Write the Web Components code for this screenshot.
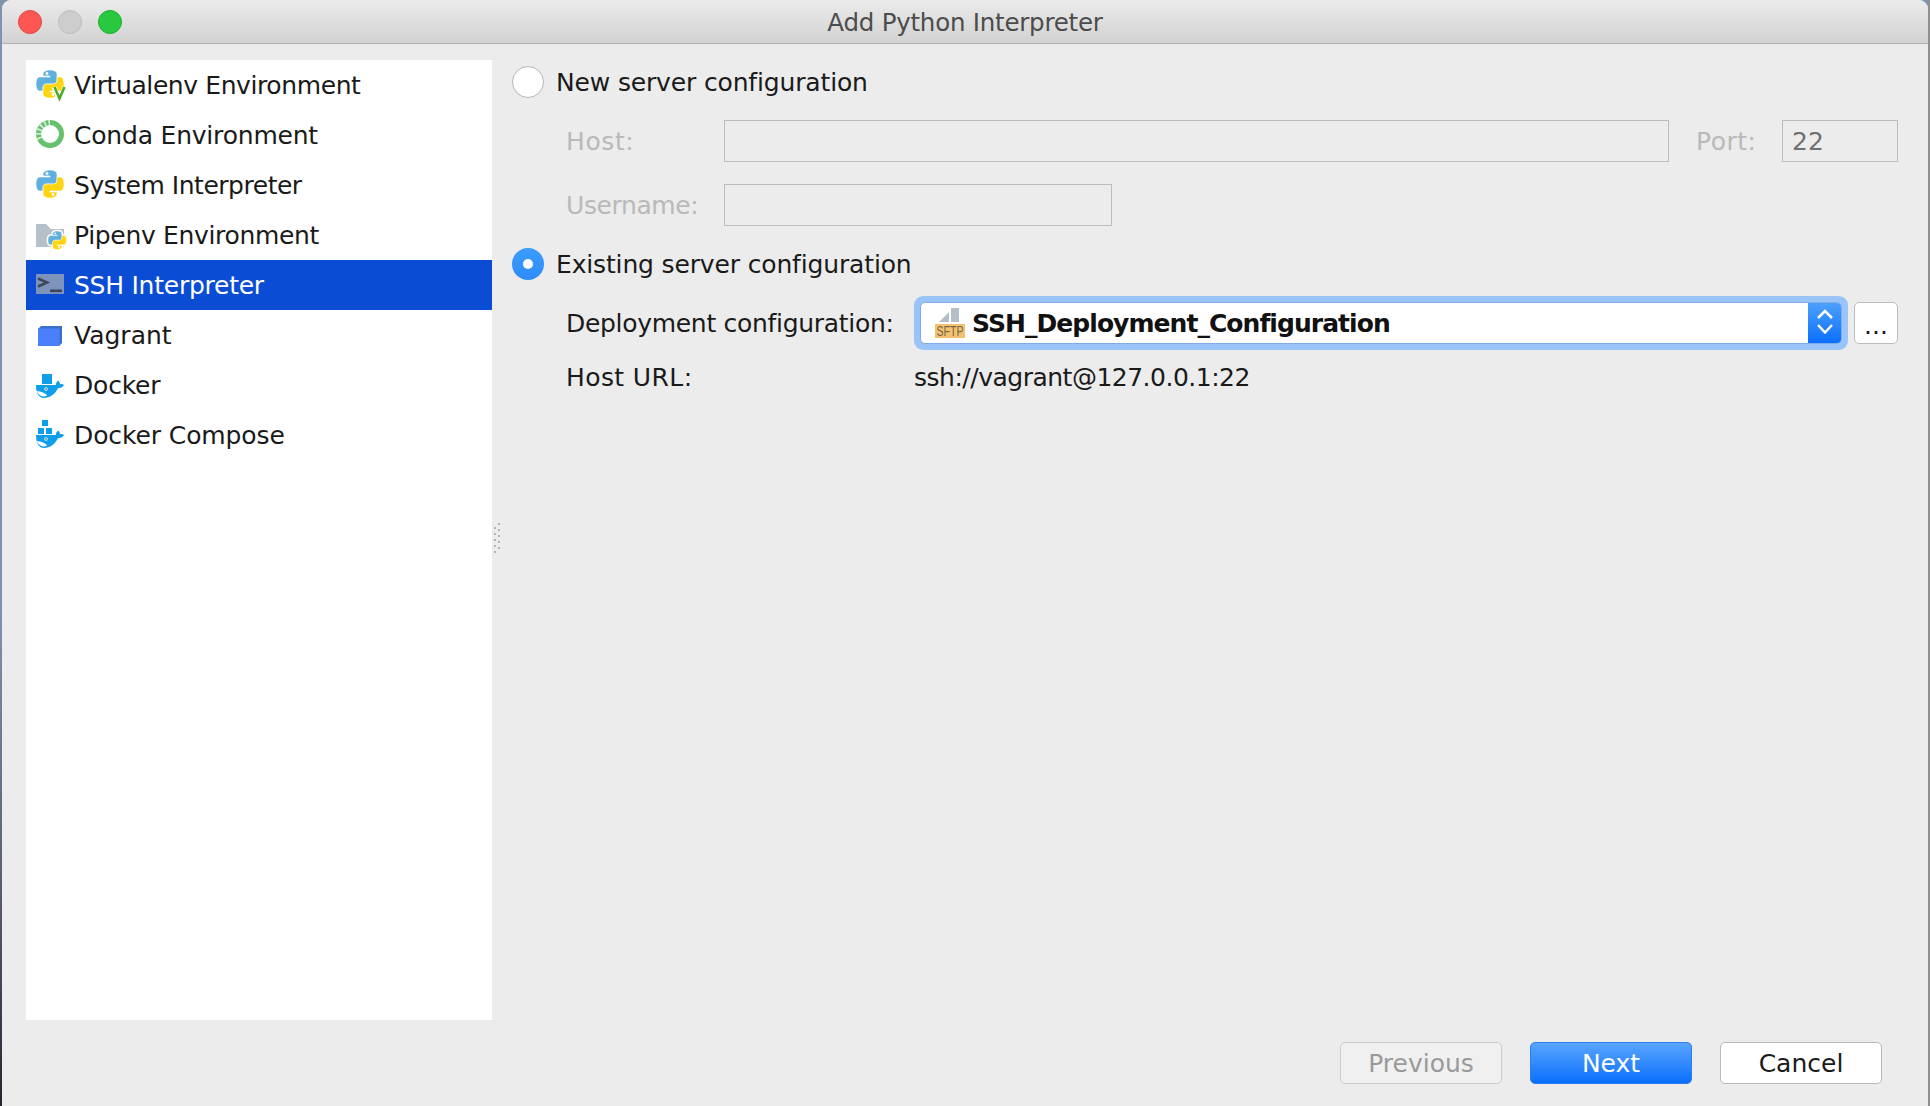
<!DOCTYPE html>
<html>
<head>
<meta charset="utf-8">
<title>Add Python Interpreter</title>
<style>
  html, body { margin: 0; height: 100%; }
  body {
    overflow: hidden;
    background:
      linear-gradient(#8f8f8f, #8f8f8f) right / 2px 100% no-repeat,
      linear-gradient(#7f93ad 0, #7f93ad 55%, #5a5f70 80%, #26262e 100%);
    font: 25px "DejaVu Sans", sans-serif;
    color: #1a1a1a;
  }
</style>
</head>
<body>
<dialog-window heading="Add Python Interpreter">
  <interpreter-list slot="list">
    <list-item icon="virtualenv" style="letter-spacing: -.4px">Virtualenv Environment</list-item>
    <list-item icon="conda" style="letter-spacing: -.2px">Conda Environment</list-item>
    <list-item icon="python" style="letter-spacing: -.48px">System Interpreter</list-item>
    <list-item icon="pipenv" style="letter-spacing: -.33px">Pipenv Environment</list-item>
    <list-item icon="ssh" selected style="letter-spacing: -.25px">SSH Interpreter</list-item>
    <list-item icon="vagrant">Vagrant</list-item>
    <list-item icon="docker" style="letter-spacing: -.2px">Docker</list-item>
    <list-item icon="compose" style="letter-spacing: -.1px">Docker Compose</list-item>
  </interpreter-list>

  <radio-option style="letter-spacing: -.15px">New server configuration</radio-option>
  <form-row disabled>
    <span slot="label" style="letter-spacing: .6px">Host:</span>
    <text-box style="flex: 1"></text-box>
    <span style="margin-left: 27px; width: 86px; color: #b9b9b9; letter-spacing: .5px">Port:</span>
    <text-box style="width: 116px">22</text-box>
  </form-row>
  <form-row disabled>
    <span slot="label" style="letter-spacing: -.4px">Username:</span>
    <text-box style="width: 388px"></text-box>
  </form-row>
  <radio-option checked style="letter-spacing: -.15px">Existing server configuration</radio-option>
  <form-row wide>
    <span slot="label" style="letter-spacing: -.3px">Deployment configuration:</span>
    <combo-box style="flex: 1">SSH_Deployment_Configuration</combo-box>
    <dialog-button kind="browse" style="margin-left: 6px">...</dialog-button>
  </form-row>
  <form-row wide plain>
    <span slot="label" style="letter-spacing: .4px">Host URL:</span>
    <span style="letter-spacing: -.5px">ssh://vagrant@127.0.0.1:22</span>
  </form-row>

  <dialog-button slot="footer" kind="disabled">Previous</dialog-button>
  <dialog-button slot="footer" kind="primary">Next</dialog-button>
  <dialog-button slot="footer">Cancel</dialog-button>
</dialog-window>

<script>
const PY_SHAPE = 'M7 6V4.500C7 1.500 10 0 14 0s7 1.500 7 4.500V11c0 1.700-1.200 3-3 3H11c-2.500 0-4 1.500-4 4v3H4c-2.600 0-4-2.500-4-7s1.400-7 4-7h10V6z';

function pythonLogo() {
  return `
    <path d="${PY_SHAPE}" fill="#5fb0de" stroke="#fff" stroke-width=".6"/>
    <path d="${PY_SHAPE}" fill="#ffd413" stroke="#fff" stroke-width=".6" transform="rotate(180 14 14)"/>
    <circle cx="11" cy="3.500" r="1.400" fill="#fff"/>
    <circle cx="17" cy="24.500" r="1.400" fill="#fff"/>`;
}

function whale() {
  return `
    <path d="M0 15H20c-.3-2.500 1-3.500 2.400-4.500 .7 1.300 1.600 2.400 1.800 3.800 1.300-.4 2.700-.2 3.800.6-1.400 2.400-3.500 3.300-6 3.300C19 24 14 28 8 28 2.500 28 0 22 0 15z" fill="#0f9ee8"/>
    <path d="M.8 21c4 .4 7.500 1.600 10.500 4.200C7.500 27.600 2.800 26.400.8 21z" fill="#fff"/>
    <circle cx="10" cy="19" r="1.700" fill="#fff"/>
    <circle cx="10" cy="19" r=".8" fill="#17405e"/>`;
}

const ICONS = {
  python: `<g transform="translate(0 -1)">${pythonLogo()}</g>`,
  virtualenv: `
    <g transform="translate(0 -1)">${pythonLogo()}</g>
    <path d="M18 16l5.500 13 5.500-13" fill="none" stroke="#fff" stroke-width="4.500"/>
    <path d="M18.500 16l5 11.500 5-11.500" fill="none" stroke="#4dab2c" stroke-width="2.600"/>`,
  conda: `
    <g transform="translate(0 -1)">
      <circle cx="14" cy="14" r="11.500" fill="none" stroke="#66c16e" stroke-width="5"/>
      <path d="M14 2.500A11.500 11.500 0 0 0 5 21" fill="none" stroke="#fff" stroke-width="5" stroke-dasharray="1.600 2.600" opacity=".75"/>
    </g>`,
  pipenv: `
    <path d="M0 3H10L15 8H28V26H0z" fill="#b6c0c8"/>
    <g transform="translate(12 10) scale(.66)">
      <path d="${PY_SHAPE}" fill="#fff" stroke="#fff" stroke-width="4"/>
      <path d="${PY_SHAPE}" fill="#fff" stroke="#fff" stroke-width="4" transform="rotate(180 14 14)"/>
      ${pythonLogo()}
    </g>`,
  ssh: `
    <rect x="0" y="3" width="28" height="20" fill="#7d93bb"/>
    <path d="M2 7.500l9 4-9 4" fill="none" stroke="#3e4657" stroke-width="2.600"/>
    <rect x="14" y="18.500" width="12" height="2.600" fill="#3e4657"/>`,
  vagrant: `
    <path d="M2 8l3-3h21v17l-3 3z" fill="#3d70c8"/>
    <path d="M2 7.500H23.500V25H2z" fill="#4a80fb"/>`,
  docker: `
    <g transform="translate(0 -1)">
      <rect x="6" y="4" width="10" height="10" fill="#0f9ee8"/>
      ${whale()}
    </g>`,
  compose: `
    <g transform="translate(0 -1)">
      <rect x="6" y="0" width="6" height="6" fill="#0f9ee8"/>
      <rect x="2" y="8" width="6" height="6" fill="#0f9ee8"/>
      <rect x="10" y="8" width="6" height="6" fill="#0f9ee8"/>
      ${whale()}
    </g>`,
  sftp: `
    <path d="M4 14L14 4V14z" fill="#b4bec8"/>
    <path d="M16 0h8v14h-8z" fill="#b4bec8"/>
    <rect x="0" y="16" width="30" height="14" fill="#f4c26e"/>
    <text x="15" y="28" text-anchor="middle" textLength="27" lengthAdjust="spacingAndGlyphs" font-family="Liberation Sans, sans-serif" font-size="14" font-weight="normal" letter-spacing="0" fill="#75664a">SFTP</text>`,
};

class IconGlyph extends HTMLElement {
  connectedCallback() {
    const size = this.getAttribute('size') || 28;
    const name = this.getAttribute('name');
    this.attachShadow({ mode: 'open' });
    this.shadowRoot.innerHTML = `
      <style>
        :host { display: block; width: ${size}px; height: ${size}px; flex: none; }
        svg { display: block; overflow: visible; }
      </style>
      <svg width="${size}" height="${size}" viewBox="0 0 ${size} ${size}">${ICONS[name] || ''}</svg>
    `;
  }
}
customElements.define('icon-glyph', IconGlyph);

class DialogWindow extends HTMLElement {
  constructor() {
    super();
    this.attachShadow({ mode: 'open' });
  }

  connectedCallback() {
    this.shadowRoot.innerHTML = `
      <style>
        :host {
          display: flex;
          flex-direction: column;
          height: 1106px;
          margin: 0 2px;
          background: #ececec;
          border-radius: 9px 9px 0 0;
          overflow: hidden;
        }
        .titlebar {
          position: relative;
          display: flex;
          align-items: center;
          justify-content: center;
          height: 44px;
          flex: none;
          box-sizing: border-box;
          padding-top: 1px;
          background: linear-gradient(#ebebeb, #d2d2d2);
          border-bottom: 1px solid #b1b1b1;
          color: #4c4c4c;
          font-size: 24.5px;
          letter-spacing: -.23px;
        }
        .lights {
          position: absolute;
          left: 16px;
          top: 10px;
          display: flex;
          gap: 16px;
        }
        .lights i {
          width: 24px;
          height: 24px;
          border-radius: 50%;
          box-sizing: border-box;
        }
        .red { background: #fc5753; border: 1px solid #df4744; }
        .grey { background: #cdcdcd; border: 1px solid #bdbdbd; }
        .green { background: #28c840; border: 1px solid #1dad2b; }
        .content {
          display: flex;
          height: 976px;
          flex: none;
        }
        .list-slot {
          display: block;
          width: 466px;
          margin: 16px 0 0 24px;
          flex: none;
        }
        .grip {
          display: flex;
          align-items: center;
          justify-content: center;
          box-sizing: border-box;
          width: 10px;
          padding: 14px 0 0 2px;
          flex: none;
        }
        .grip svg { display: block; }
        .panel {
          flex: 1;
          display: flex;
          flex-direction: column;
          padding: 22px 30px 0 10px;
          min-width: 0;
        }
        .footer {
          display: flex;
          justify-content: flex-end;
          gap: 28px;
          padding: 22px 46px 0 0;
        }
      </style>
      <div class="titlebar">
        <div class="lights"><i class="red"></i><i class="grey"></i><i class="green"></i></div>
        ${this.getAttribute('heading')}
      </div>
      <div class="content">
        <div class="list-slot"><slot name="list"></slot></div>
        <div class="grip">
          <svg width="8" height="32" viewBox="0 0 8 32" fill="#b4b4b4">
            <rect x="0" y="4" width="2" height="2"/><rect x="4" y="0" width="2" height="2"/>
            <rect x="0" y="10" width="2" height="2"/><rect x="4" y="6" width="2" height="2"/>
            <rect x="0" y="16" width="2" height="2"/><rect x="4" y="12" width="2" height="2"/>
            <rect x="0" y="22" width="2" height="2"/><rect x="4" y="18" width="2" height="2"/>
            <rect x="0" y="28" width="2" height="2"/><rect x="4" y="24" width="2" height="2"/>
          </svg>
        </div>
        <div class="panel"><slot></slot></div>
      </div>
      <div class="footer"><slot name="footer"></slot></div>
    `;
  }
}
customElements.define('dialog-window', DialogWindow);

class InterpreterList extends HTMLElement {
  constructor() {
    super();
    this.attachShadow({ mode: 'open' });
    this.shadowRoot.innerHTML = `
      <style>
        :host { display: block; height: 960px; background: #fff; }
      </style>
      <slot></slot>
    `;
  }
}
customElements.define('interpreter-list', InterpreterList);

class ListItem extends HTMLElement {
  connectedCallback() {
    const selected = this.hasAttribute('selected');
    this.attachShadow({ mode: 'open' });
    this.shadowRoot.innerHTML = `
      <style>
        :host {
          display: flex;
          align-items: center;
          gap: 10px;
          height: 50px;
          padding-left: 10px;
          background: ${selected ? '#0a4dd4' : 'transparent'};
          color: ${selected ? '#fff' : '#1a1a1a'};
          white-space: nowrap;
        }
      </style>
      <icon-glyph name="${this.getAttribute('icon')}"></icon-glyph>
      <slot></slot>
    `;
  }
}
customElements.define('list-item', ListItem);

class RadioOption extends HTMLElement {
  connectedCallback() {
    const checked = this.hasAttribute('checked');
    this.attachShadow({ mode: 'open' });
    this.shadowRoot.innerHTML = `
      <style>
        :host {
          display: flex;
          align-items: center;
          gap: 12px;
          height: 32px;
          margin-bottom: 22px;
          white-space: nowrap;
        }
        .dot {
          width: 32px;
          height: 32px;
          box-sizing: border-box;
          border-radius: 50%;
          display: flex;
          align-items: center;
          justify-content: center;
          background: ${checked ? 'linear-gradient(#3d9bfd, #2d8cfb)' : '#fff'};
          border: ${checked ? 'none' : '1px solid #b5b5b5'};
        }
        .dot i { width: 10px; height: 10px; border-radius: 50%; background: #fff; }
        .text { padding-top: 1px; }
      </style>
      <div class="dot">${checked ? '<i></i>' : ''}</div>
      <div class="text"><slot></slot></div>
    `;
  }
}
customElements.define('radio-option', RadioOption);

class FormRow extends HTMLElement {
  constructor() {
    super();
    this.attachShadow({ mode: 'open' });
    const disabled = this.hasAttribute('disabled');
    const wide = this.hasAttribute('wide');
    const plain = this.hasAttribute('plain');
    this.shadowRoot.innerHTML = `
      <style>
        :host {
          display: flex;
          align-items: center;
          height: ${plain ? 32 : wide ? 54 : 42}px;
          margin: ${plain ? '0' : wide ? '-6px 0 11px' : '0 0 22px'};
          padding-left: 54px;
          white-space: nowrap;
        }
        .label {
          width: ${wide ? 348 : 158}px;
          flex: none;
          color: ${disabled ? '#b9b9b9' : 'inherit'};
        }
      </style>
      <div class="label"><slot name="label"></slot></div>
      <slot></slot>
    `;
  }
}
customElements.define('form-row', FormRow);

class TextBox extends HTMLElement {
  constructor() {
    super();
    this.attachShadow({ mode: 'open' });
    this.shadowRoot.innerHTML = `
      <style>
        :host {
          display: flex;
          align-items: center;
          box-sizing: border-box;
          height: 42px;
          padding-left: 9px;
          border: 1px solid #bcbcbc;
          color: #707070;
        }
      </style>
      <slot></slot>
    `;
  }
}
customElements.define('text-box', TextBox);

class ComboBox extends HTMLElement {
  constructor() {
    super();
    this.attachShadow({ mode: 'open' });
    this.shadowRoot.innerHTML = `
      <style>
        :host {
          display: flex;
          box-sizing: border-box;
          height: 54px;
          padding: 6px;
          background: #9ac4f8;
          border-radius: 9px;
        }
        .box {
          flex: 1;
          display: flex;
          align-items: center;
          gap: 7px;
          box-sizing: border-box;
          padding-left: 14px;
          background: #fff;
          border: 1px solid #7eade6;
          border-radius: 5px;
          overflow: hidden;
          font-weight: bold;
          font-size: 25px;
          letter-spacing: -.95px;
          color: #111;
        }
        .text { flex: 1; }
        .arrows {
          width: 33px;
          align-self: stretch;
          background: linear-gradient(#4da0fc, #0a6ffd);
          display: flex;
          align-items: center;
          justify-content: center;
        }
      </style>
      <div class="box">
        <icon-glyph name="sftp" size="30"></icon-glyph>
        <span class="text"><slot></slot></span>
        <div class="arrows">
          <svg width="16" height="28" viewBox="0 0 16 28" fill="none" stroke="#fff" stroke-width="2.500">
            <path d="M1 9l7-7 7 7M1 16l7 7.500 7-7.500"/>
          </svg>
        </div>
      </div>
    `;
  }
}
customElements.define('combo-box', ComboBox);

class DialogButton extends HTMLElement {
  connectedCallback() {
    const kind = this.getAttribute('kind');
    const looks = {
      primary: 'background: linear-gradient(#5aa5fd, #0a6ffd); color: #fff; border-color: #2a7cf0;',
      disabled: 'background: #f0f0f0; color: #9a9a9a; border-color: #cbcbcb;',
      browse: 'width: 44px; background: #fff; border-color: #bcbcbc; align-items: flex-end; line-height: 34px;',
    };
    this.attachShadow({ mode: 'open' });
    this.shadowRoot.innerHTML = `
      <style>
        :host {
          display: flex;
          align-items: center;
          justify-content: center;
          box-sizing: border-box;
          width: 162px;
          height: 42px;
          flex: none;
          background: #fff;
          border: 1px solid #b8b8b8;
          border-radius: 5px;
          color: #1a1a1a;
          ${looks[kind] || ''}
        }
      </style>
      <slot></slot>
    `;
  }
}
customElements.define('dialog-button', DialogButton);
</script>
</body>
</html>
